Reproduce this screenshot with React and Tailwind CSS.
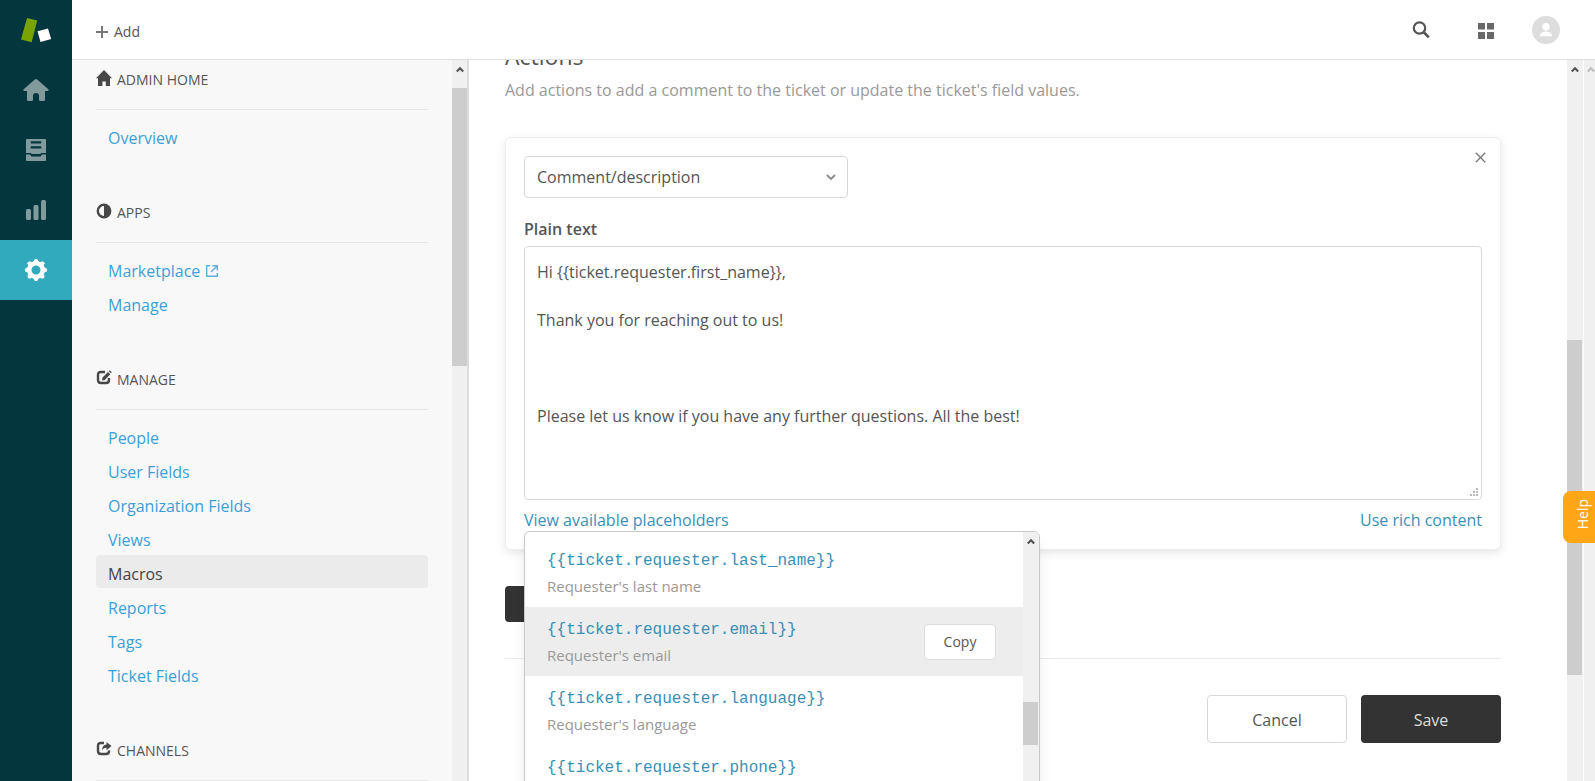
import { useState } from 'react';
import clsx from 'clsx';

const navSections = [
    { title: 'Admin Home', icon: HomeGlyph, items: ['Overview'] },
    { title: 'Apps', icon: ContrastGlyph, items: ['Marketplace', 'Manage'] },
    {
        title: 'Manage',
        icon: EditGlyph,
        items: ['People', 'User Fields', 'Organization Fields', 'Views', 'Macros', 'Reports', 'Tags', 'Ticket Fields']
    },
    { title: 'Channels', icon: ShareGlyph, items: [] }
];

const placeholders = [
    { code: '{{ticket.requester.last_name}}', label: "Requester's last name" },
    { code: '{{ticket.requester.email}}', label: "Requester's email" },
    { code: '{{ticket.requester.language}}', label: "Requester's language" },
    { code: '{{ticket.requester.phone}}', label: "Requester's phone" }
];

const defaultComment = `Hi {{ticket.requester.first_name}},

Thank you for reaching out to us!



Please let us know if you have any further questions. All the best!`;

function HomeGlyph() {
    return (
        <svg width="16" height="16" viewBox="0 0 16 16" fill="#484848">
            <path d="M8 0 16 8.3h-2V16H9.8v-4.6H6.4V16H2V8.3H0z" />
        </svg>
    );
}

function ContrastGlyph() {
    return (
        <svg width="16" height="16" viewBox="0 0 16 16">
            <circle cx="8" cy="8" r="6.2" fill="none" stroke="#484848" strokeWidth="2.4" />
            <path d="M8 1.5a6.5 6.5 0 0 1 0 13z" fill="#484848" />
        </svg>
    );
}

function EditGlyph() {
    return (
        <svg width="16" height="16" viewBox="0 0 16 16" fill="none">
            <path d="M9 2H5Q2 2 2 5v5q0 3 3 3h5q3 0 3-3V8" stroke="#484848" strokeWidth="2.4" />
            <path d="M6 10.5 6.6 7.600 12 2l2.3 2.3-5.5 5.6z" fill="#484848" />
            <path d="m12.8 1.300 1-1 2 2-1 1z" fill="#484848" />
        </svg>
    );
}

function ShareGlyph() {
    return (
        <svg width="16" height="16" viewBox="0 0 16 16" fill="none">
            <path d="M8 2H5Q2 2 2 5v5q0 3 3 3h5q3 0 3-3v-.5" stroke="#484848" strokeWidth="2.4" />
            <path d="M10.5 1 15.5 5l-5 4.200V6.700C8.500 6.500 7 7.500 6 9.500 6 6 7.500 3.700 10.5 3.400z" fill="#484848" />
        </svg>
    );
}

function ExternalGlyph() {
    return (
        <svg width="12" height="12" viewBox="0 0 12 12" fill="none" stroke="currentColor" strokeOpacity="0.8">
            <path d="M4 .7H.7v10.600h10.600V8M6.500.7h4.800v4.800M11 1 5 7" strokeWidth="1.400" />
        </svg>
    );
}

function Logo() {
    return (
        <svg width="32" height="25" viewBox="0 0 32 25" aria-hidden="true">
            <path d="M7 0 17.300 2.600 11.600 24.200 1 21.500z" fill="#78a300" />
            <path d="M17.500 13.200 28 10.500 31.200 21 20.500 24z" fill="#fff" />
        </svg>
    );
}

const railItems = [
    {
        label: 'Home',
        icon: (
            <path d="M13 0Q13.600 0 14.200.5L25.600 10.400Q26.300 11.800 24.500 12H22v8.500Q22 22 20.500 22h-3Q16 22 16 20.500V16q-.5-2-3-2t-3 2v4.500Q10 22 8.500 22h-3Q4 22 4 20.500V12H1.500Q-.3 11.800.4 10.400L11.800.5Q12.400 0 13 0z" />
        )
    },
    {
        label: 'Views',
        icon: (
            <>
                <path fillRule="evenodd" d="M4 0h18q1 0 1 1v13h-4.500L17 15H9l-1.500-1H3V1q0-1 1-1zm4.500 2.200q-.9 0-.9 1.200t.9 1.200h9q.9 0 .9-1.200t-.9-1.200zm0 5q-.9 0-.9 1.200t.9 1.200h9q.9 0 .9-1.200t-.9-1.200z" />
                <path d="M3 15.500h4L8.500 17.500h9L19 15.500h4V21q0 1-1 1H4q-1 0-1-1z" />
            </>
        )
    },
    {
        label: 'Reporting',
        icon: (
            <>
                <rect x="3" y="10" width="5" height="11" rx="1.500" />
                <rect x="10.500" y="6" width="5" height="15" rx="1.500" />
                <rect x="18" y="1" width="5" height="20" rx="1.500" />
            </>
        )
    },
    {
        label: 'Admin',
        active: true,
        icon: (
            <>
                <circle cx="13" cy="11" r="6.700" fill="none" stroke="currentColor" strokeWidth="4.400" />
                {[0, 45, 90, 135, 180, 225, 270, 315].map((angle) => (
                    <path key={angle} d="M10.200 3 11.600.2q1.400-.6 2.800 0L15.800 3z" transform={`rotate(${angle} 13 11)`} />
                ))}
            </>
        )
    }
];

const Caret = ({ faded }) => (
    <svg width="8" height="7" viewBox="0 0 8 7" fill="none" className="shrink-0">
        <path d="M.8 5.500 4 2.200 7.200 5.500" stroke={faded ? '#bdbdbd' : '#505050'} strokeWidth="2" />
    </svg>
);

const ScrollTrack = ({ className, thumb, faded }) => (
    <div aria-hidden="true" className={clsx('flex shrink-0 flex-col overflow-hidden bg-[#f0f0f0]', className)}>
        <div className="flex justify-center pt-1.5">
            <Caret faded={faded} />
        </div>
        {thumb && <div className={clsx('w-[15px] shrink-0 bg-[#cdcdcd]', thumb)} />}
    </div>
);

const Rail = () => (
    <nav className="flex w-[72px] shrink-0 flex-col bg-[#03363d]">
        <a href="#" aria-label="Zendesk" className="flex h-[60px] items-center justify-center">
            <Logo />
        </a>
        {railItems.map(({ label, icon, active }) => (
            <a
                key={label}
                href="#"
                aria-label={label}
                className={clsx(
                    'flex h-[60px] items-center justify-center',
                    active ? 'bg-[#30aabc] text-white' : 'text-[#819a9e]'
                )}
            >
                <svg width="26" height="22" viewBox="0 0 26 22" fill="currentColor">{icon}</svg>
            </a>
        ))}
    </nav>
);

const TopBar = () => (
    <header className="flex h-[60px] shrink-0 items-center justify-between border-b border-[#e0e0e0] bg-white pr-[35px] pl-6">
        <button className="flex items-center gap-1.5 pt-1 text-sm text-[#555]">
            <svg width="12" height="12" viewBox="0 0 12 12" stroke="#777" strokeWidth="2">
                <path d="M6 0v12M0 6h12" />
            </svg>
            Add
        </button>
        <div className="flex items-center">
            <button aria-label="Search" className="mr-10">
                <svg width="18" height="18" viewBox="0 0 18 18" fill="none" stroke="#555">
                    <circle cx="7.500" cy="7" r="5.700" strokeWidth="2.200" />
                    <path d="m11.500 11 5.300 5.300" strokeWidth="2.600" />
                </svg>
            </button>
            <button aria-label="Products" className="mr-[38px] ml-2 pt-0.5">
                <svg width="16" height="16" viewBox="0 0 16 16" fill="#686868">
                    <path d="M0 0h7v6.500H0zM9 0h7v6.500H9zM0 9h7v7H0zM9 9h7v7H9z" />
                </svg>
            </button>
            <button aria-label="Profile">
                <svg width="28" height="28" viewBox="0 0 28 28">
                    <circle cx="14" cy="14" r="14" fill="#ddd" />
                    <circle cx="14" cy="10.700" r="3.700" fill="#fff" />
                    <path d="M7.800 20.300q.5-4.800 6.200-4.800t6.200 4.800z" fill="#fff" />
                </svg>
            </button>
        </div>
    </header>
);

const Sidebar = ({ selected }) => (
    <aside className="flex w-[397px] shrink-0 overflow-hidden border-r-2 border-[#dcdcdc] bg-[#f8f8f8]">
        <div className="min-w-0 flex-1 pt-2 pr-6 pl-6">
            {navSections.map(({ title, icon: Icon, items }) => (
                <section key={title} className="pb-[49px]">
                    <h2 className="flex h-[42px] items-start gap-[5px] border-b border-[#e6e6e6] text-sm leading-6 text-[#555] uppercase">
                        <span className="pt-0.5"><Icon /></span>
                        {title}
                    </h2>
                    <ul className="flex flex-col gap-px pt-[9px]">
                        {items.map((item) => (
                            <li key={item}>
                                <a
                                    href="#"
                                    className={clsx(
                                        'flex h-[33px] items-center gap-1.5 rounded px-3 pt-1 text-base',
                                        item === selected ? 'bg-[#ebebeb] text-[#444]' : 'text-[#3b9fd8]'
                                    )}
                                >
                                    {item}
                                    {item === 'Marketplace' && <ExternalGlyph />}
                                </a>
                            </li>
                        ))}
                    </ul>
                </section>
            ))}
        </div>
        <ScrollTrack className="w-[15px]" thumb="mt-[15px] h-[278px]" />
    </aside>
);

const PlaceholderMenu = () => (
    <div className="absolute top-full left-0 z-10 flex h-[320px] w-[516px] overflow-hidden rounded-t-md border border-[#c8c8c8] bg-white shadow-lg">
        <ul className="flex-1 pt-[6px]">
            {placeholders.map(({ code, label }, i) => (
                <li
                    key={code}
                    className={clsx('flex h-[69px] items-center justify-between pr-[27px] pl-[22px]', i === 1 && 'bg-[#ededed]')}
                >
                    <div>
                        <code className="block font-['Liberation_Mono',monospace] text-base leading-[26px] text-[#3a8fb7]">{code}</code>
                        <p className="text-[15px] leading-6 text-[#999]">{label}</p>
                    </div>
                    {i === 1 && (
                        <button className="h-9 w-[72px] rounded border border-[#ddd] bg-white text-sm text-[#555]">Copy</button>
                    )}
                </li>
            ))}
        </ul>
        <ScrollTrack className="w-4" thumb="mt-[157px] h-[43px]" />
    </div>
);

const ActionCard = () => {
    const [comment, setComment] = useState(defaultComment);
    const [menuOpen, setMenuOpen] = useState(true);

    return (
        <div className="rounded-md border border-[#eee] bg-white p-[18px] shadow-[0_3px_10px_rgba(0,0,0,0.1)]">
            <div className="flex items-start justify-between">
                <div className="relative w-[324px]">
                    <select
                        aria-label="Action"
                        className="h-[42px] w-full appearance-none rounded border border-[#d8d8d8] bg-white px-3 text-base text-[#555]"
                    >
                        <option>Comment/description</option>
                    </select>
                    <svg width="10" height="7" viewBox="0 0 10 7" fill="none" className="pointer-events-none absolute top-[18px] right-3">
                        <path d="m1 1 4 4 4-4" stroke="#888" strokeWidth="1.800" />
                    </svg>
                </div>
                <button aria-label="Remove action" className="-mt-[7px] -mr-[7px] p-[3px]">
                    <svg width="11" height="11" viewBox="0 0 11 11" stroke="#777" strokeWidth="1.300">
                        <path d="m.8.8 9.400 9.400M10.200.8.8 10.200" />
                    </svg>
                </button>
            </div>

            <label htmlFor="comment" className="mt-[19px] block leading-6 font-semibold text-[#555]">Plain text</label>
            <div className="relative mt-[5px]">
                <textarea
                    id="comment"
                    value={comment}
                    onChange={(e) => setComment(e.target.value)}
                    className="block h-[254px] w-full resize-none rounded border border-[#d8d8d8] px-3 py-[13px] leading-6 text-[#555]"
                />
                <svg width="9" height="9" viewBox="0 0 9 9" fill="#b8b8b8" className="pointer-events-none absolute right-[3px] bottom-[3px]">
                    <path d="M6 0h2v2H6zM3 3h2v2H3zM6 3h2v2H6zM0 6h2v2H0zM3 6h2v2H3zM6 6h2v2H6z" />
                </svg>
            </div>

            <div className="relative flex justify-between pt-[10px] text-[#3a8fb7]">
                <button onClick={() => setMenuOpen(!menuOpen)} className="leading-[21px]">View available placeholders</button>
                <button className="leading-[21px]">Use rich content</button>
                {menuOpen && <PlaceholderMenu />}
            </div>
        </div>
    );
};

const MacroEditor = () => (
    <main className="flex min-w-0 flex-1 overflow-hidden bg-white">
        <div className="min-w-0 flex-1 pr-[66px] pl-9">
            <h1 className="-mt-[22px] text-[23px] leading-9 text-[#555]">Actions</h1>
            <p className="mt-1 leading-6 text-[#999]">
                Add actions to add a comment to the ticket or update the ticket's field values.
            </p>
            <div className="mt-[35px]">
                <ActionCard />
            </div>
            <button className="mt-9 block h-9 rounded bg-[#333] px-5 text-sm text-[#ddd]">Add action</button>
            <div className="mt-9 flex justify-end gap-[14px] border-t border-[#ebebeb] pt-9">
                <button className="h-12 w-[140px] rounded border border-[#d8d8d8] bg-white pt-0.5 text-[#555]">Cancel</button>
                <button className="h-12 w-[140px] rounded bg-[#333] pt-0.5 text-[#ddd]">Save</button>
            </div>
        </div>
        <ScrollTrack className="w-4" thumb="mt-[267px] h-[335px]" />
        <ScrollTrack className="ml-px w-[11px] items-end" faded />
    </main>
);

export default function App() {
    return (
        <div className="flex h-screen overflow-hidden bg-white font-['Open_Sans',sans-serif] text-base">
            <Rail />
            <div className="flex min-w-0 flex-1 flex-col">
                <TopBar />
                <div className="flex min-h-0 flex-1">
                    <Sidebar selected="Macros" />
                    <MacroEditor />
                </div>
            </div>
            <button className="fixed top-[491px] right-0 h-[52px] w-8 rounded-l-lg bg-[#ffa617] pl-2 text-sm text-white">
                <span className="inline-block rotate-180 [writing-mode:vertical-rl]">Help</span>
            </button>
        </div>
    );
}
